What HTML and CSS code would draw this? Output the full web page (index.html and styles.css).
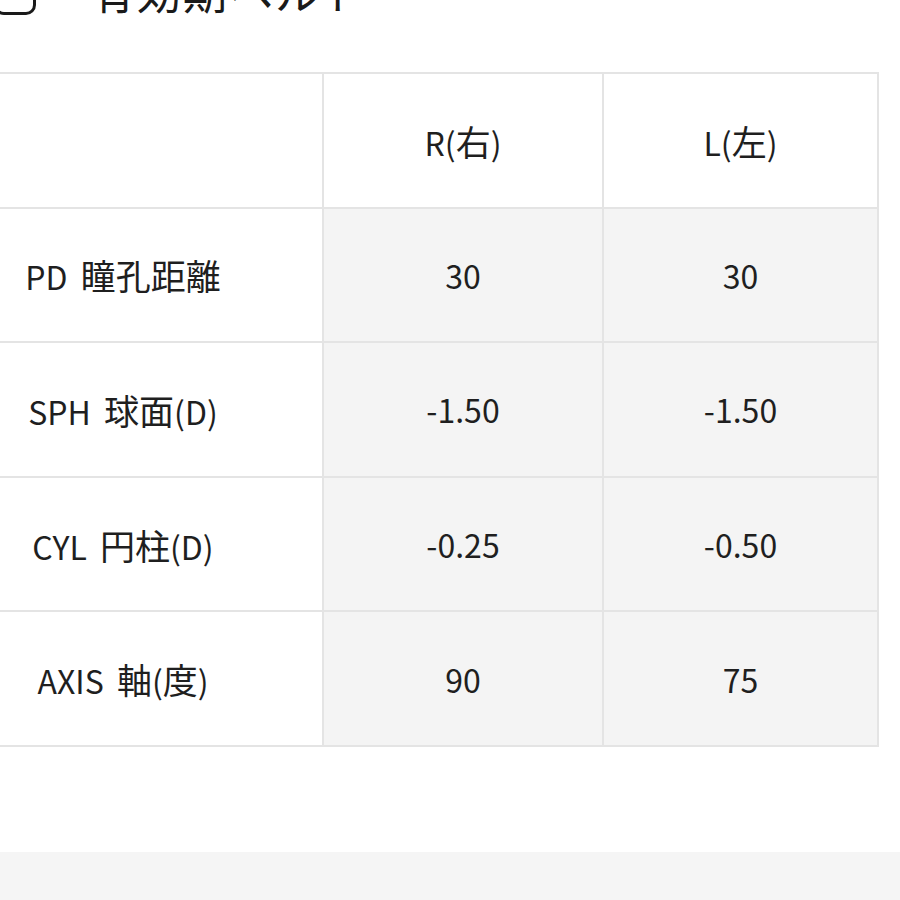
FILE: index.html
```html
<!DOCTYPE html>
<html lang="ja">
<head>
<meta charset="utf-8">
<link rel="stylesheet" href="styles.css">
</head>
<body>
<div class="page">
  <div class="title-row">
    <span class="title-icon"></span>
    <span class="title-text">有効期ヘルト</span>
  </div>
  <table class="rx">
    <colgroup>
      <col class="c-label">
      <col class="c-val">
      <col class="c-val2">
    </colgroup>
    <tr class="head">
      <td></td>
      <td>R(<span class="cj">右</span>)</td>
      <td>L(<span class="cj">左</span>)</td>
    </tr>
    <tr>
      <td class="label">PD <span class="cj">瞳孔距離</span></td>
      <td class="val">30</td>
      <td class="val">30</td>
    </tr>
    <tr>
      <td class="label">SPH <span class="cj">球面</span>(D)</td>
      <td class="val">-1.50</td>
      <td class="val">-1.50</td>
    </tr>
    <tr>
      <td class="label">CYL <span class="cj">円柱</span>(D)</td>
      <td class="val">-0.25</td>
      <td class="val">-0.50</td>
    </tr>
    <tr>
      <td class="label">AXIS <span class="cj">軸</span>(<span class="cj">度</span>)</td>
      <td class="val">90</td>
      <td class="val">75</td>
    </tr>
  </table>
  <div class="spacer"></div>
  <div class="footer-band"></div>
</div>
</body>
</html>
```
FILE: styles.css
```css
html, body {
  margin: 0;
  padding: 0;
  background: #ffffff;
  overflow: hidden;
}
body {
  font-family: "Noto Sans CJK JP", "Noto Sans", sans-serif;
  color: #1f1f1f;
  width: 900px;
  height: 900px;
}
.page {
  display: flex;
  flex-direction: column;
  height: 900px;
}
.title-row {
  display: flex;
  align-items: flex-end;
  height: 40px;
  margin-top: -25px;
  flex: none;
}
.title-icon {
  display: block;
  box-sizing: border-box;
  width: 42px;
  height: 40px;
  margin-left: -6px;
  border: 3px solid #1a1a1a;
  border-radius: 10px;
  flex: none;
}
.title-text {
  font-size: 44px;
  line-height: 40px;
  margin-left: 55px;
  margin-bottom: 4px;
  color: #1a1a1a;
  letter-spacing: 2px;
  white-space: nowrap;
}
.rx {
  margin-top: 57px;
  margin-left: -78px;
  border-collapse: collapse;
  table-layout: fixed;
  width: 955px;
  flex: none;
}
.c-label { width: 400px; }
.c-val { width: 280px; }
.c-val2 { width: 275px; }
.rx td {
  border: 2px solid #e4e4e4;
  height: 132.6px;
  padding: 0;
  text-align: center;
  vertical-align: middle;
  font-size: 32px;
  line-height: 1;
  white-space: nowrap;
}
.rx td.label {
  word-spacing: 6px;
}
.cj {
  font-size: 35px;
}
.rx tr.head td {
  background: #ffffff;
}
.rx td.label {
  background: #ffffff;
}
.rx td.val {
  background: #f4f4f4;
}
.spacer {
  flex: 1;
}
.footer-band {
  height: 48px;
  background: #f5f5f5;
  flex: none;
}
```
